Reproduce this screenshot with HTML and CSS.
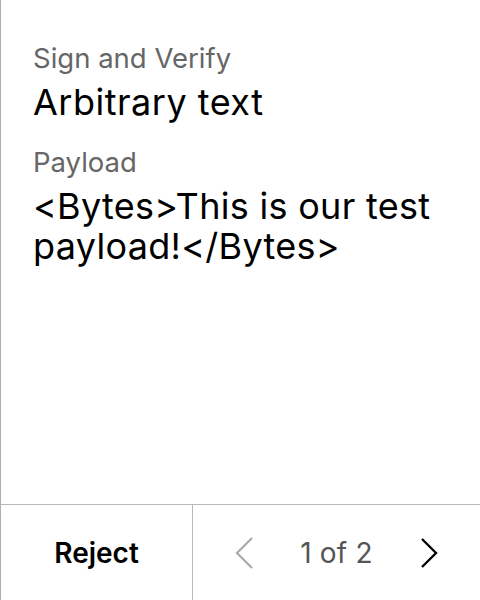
FILE: index.html
```html
<!DOCTYPE html>
<html>
<head>
<meta charset="utf-8">
<link rel="stylesheet" href="styles.css">
</head>
<body>
<div class="screen">
  <div class="content">
    <div class="label">Sign and Verify</div>
    <div class="title">Arbitrary text</div>
    <div class="label payload-label">Payload</div>
    <div class="payload">&lt;Bytes&gt;This is our test payload!&lt;/Bytes&gt;</div>
  </div>
  <div class="footer">
    <div class="reject">Reject</div>
    <div class="pager">
      <svg class="chev prev" width="22" height="34" viewBox="0 0 22 34"><path d="M19 2 L4 17 L19 32" fill="none" stroke="#aaaaaa" stroke-width="2.2"/></svg>
      <span class="count">1 of 2</span>
      <svg class="chev next" width="22" height="34" viewBox="0 0 22 34"><path d="M4 3 L18 17 L4 31" fill="none" stroke="#000000" stroke-width="2.4"/></svg>
    </div>
  </div>
</div>
</body>
</html>
```

FILE: styles.css
```css
html, body {
  margin: 0;
  padding: 0;
  background: #ffffff;
}
body {
  font-family: Inter, "Noto Sans", sans-serif;
  color: #000;
}
.screen {
  width: 479px;
  height: 600px;
  border-left: 1px solid #b0b0b0;
  display: flex;
  flex-direction: column;
}
.content {
  flex: 1;
  padding: 41px 32px 0 32px;
}
.label {
  font-size: 27.5px;
  line-height: 34px;
  color: #666666;
}
.title {
  font-size: 36px;
  line-height: 44px;
  margin-top: 5px;
  letter-spacing: 0.5px;
}
.payload-label {
  margin-top: 21px;
}
.payload {
  font-size: 36px;
  line-height: 40px;
  margin-top: 7px;
  letter-spacing: 0.3px;
}
.footer {
  height: 95px;
  border-top: 1px solid #b8b8b8;
  display: flex;
}
.reject {
  width: 191px;
  border-right: 1px solid #b8b8b8;
  display: flex;
  align-items: center;
  justify-content: center;
  font-size: 28px;
  font-weight: 600;
}
.pager {
  flex: 1;
  display: flex;
  align-items: center;
  justify-content: space-between;
  padding: 0 40px 0 40px;
}
.count {
  font-size: 28px;
  letter-spacing: 0.2px;
  color: #555555;
}
.chev {
  display: block;
}
```
